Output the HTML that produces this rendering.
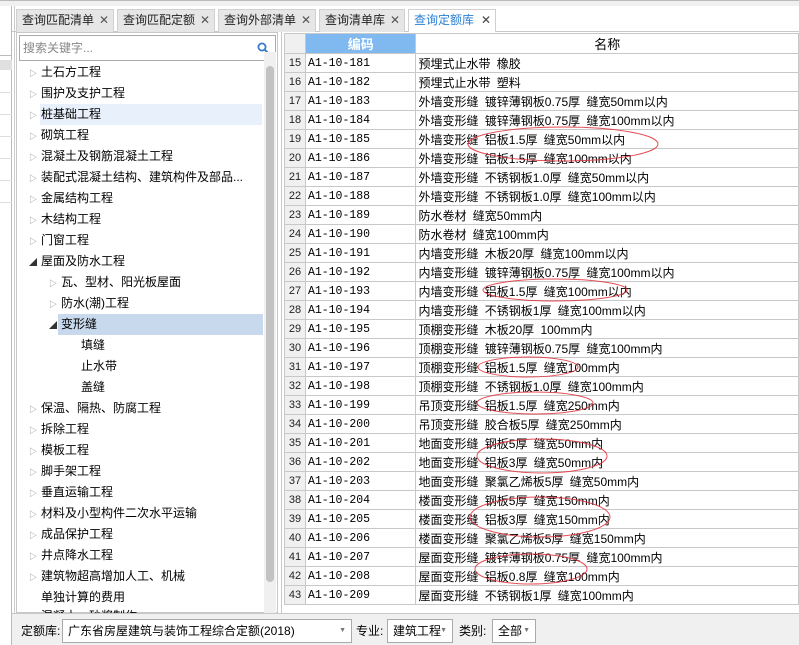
<!DOCTYPE html>
<html><head><meta charset="utf-8"><style>
*{margin:0;padding:0;box-sizing:border-box}
body{width:799px;height:645px;overflow:hidden;background:#fff;font-family:"Liberation Sans","Noto Sans CJK SC",sans-serif;font-size:12px;color:#000;position:relative}
.abs{position:absolute}
.tab{position:absolute;top:9px;height:23px;background:#e6e6e6;border:1px solid #d0d0d0;border-bottom:none;font-size:12px;line-height:21px;padding-left:5px;color:#222}
.tab .x{position:absolute;right:4px;top:0;color:#555;font-size:12px}
.tree div{position:absolute;height:21px;line-height:21px;font-size:12px;white-space:nowrap}
.tri{position:absolute;font-size:8px;color:#888}
table{border-collapse:collapse;position:absolute;left:284px;top:33px;table-layout:fixed}
td{border:1px solid #c8c8c8;height:19px;padding:0 2px;white-space:nowrap;overflow:hidden;font-size:12px;word-spacing:3px}
td.n{background:#f0f0f0;text-align:center;color:#222;font-size:11px}
td.c{font-family:"Liberation Mono","Noto Sans CJK SC",monospace;font-size:11.5px;word-spacing:0}
.sel{border:1px solid #aaa;background:#fff;height:24px;position:absolute;top:619px;font-size:12px;line-height:22px;padding-left:5px}
.sel .ar{position:absolute;right:5px;top:0;font-size:7px;color:#777}
.lbl{position:absolute;top:619px;font-size:12px;line-height:24px}
</style></head><body>
<div class="abs" style="left:0;top:0;width:799px;height:1px;background:#bbb"></div>
<div class="abs" style="left:0;top:1px;width:799px;height:5px;background:#f0f0f0"></div>
<div class="abs" style="left:0;top:31px;width:799px;height:1px;background:#c8c8c8"></div>
<div class="abs" style="left:0;top:6px;width:12px;height:639px;background:#fff;border-right:1px solid #bbb"></div>
<div class="abs" style="left:0;top:55px;width:12px;height:1px;background:#bbb"></div>
<div class="abs" style="left:0;top:60px;width:12px;height:10px;background:#e0e0e0"></div>
<div class="abs" style="left:0;top:92px;width:12px;height:1px;background:#ddd"></div>
<div class="abs" style="left:0;top:114px;width:12px;height:1px;background:#ddd"></div>
<div class="abs" style="left:0;top:136px;width:12px;height:1px;background:#ddd"></div>
<div class="abs" style="left:0;top:158px;width:12px;height:1px;background:#ddd"></div>
<div class="abs" style="left:0;top:180px;width:12px;height:1px;background:#ddd"></div>
<div class="abs" style="left:0;top:202px;width:12px;height:1px;background:#ddd"></div>
<div class="abs" style="left:14px;top:6px;width:1px;height:639px;background:#ccc"></div>
<div class="tab" style="left:16px;width:98px">查询匹配清单<span class="x">✕</span></div>
<div class="tab" style="left:117px;width:98px">查询匹配定额<span class="x">✕</span></div>
<div class="tab" style="left:218px;width:98px">查询外部清单<span class="x">✕</span></div>
<div class="tab" style="left:319px;width:86px">查询清单库<span class="x">✕</span></div>
<div class="tab" style="left:408px;width:88px;background:#fff;color:#2a7fd4;height:24px">查询定额库<span class="x" style="color:#444">✕</span></div>
<div class="abs" style="left:16px;top:32px;width:262px;height:581px;border:1px solid #c8c8c8;background:#fff"></div>
<div class="abs" style="left:19px;top:35px;width:257px;height:26px;border:1px solid #aaa;font-size:12px;line-height:24px;padding-left:3px;color:#888">搜索关键字...
<svg style="position:absolute;right:6px;top:6px" width="12" height="12"><circle cx="5" cy="5" r="3.6" fill="none" stroke="#3a7bc8" stroke-width="1.8"/><line x1="7.6" y1="7.6" x2="11" y2="11" stroke="#3a7bc8" stroke-width="2"/></svg></div>
<div class="abs" style="left:40px;top:104px;width:222px;height:21px;background:#e8f1fb"></div>
<div class="abs" style="left:58px;top:314px;width:205px;height:21px;background:#c8d9ee"></div>
<div class="abs" style="left:264px;top:52px;width:12px;height:561px;background:#f0f0f0"></div>
<div class="abs" style="left:266px;top:66px;width:8px;height:516px;background:#c2c2c2;border-radius:4px"></div>
<div class="tree">
<div style="left:41px;top:62px">土石方工程</div>
<div style="left:41px;top:83px">围护及支护工程</div>
<div style="left:41px;top:104px">桩基础工程</div>
<div style="left:41px;top:125px">砌筑工程</div>
<div style="left:41px;top:146px">混凝土及钢筋混凝土工程</div>
<div style="left:41px;top:167px">装配式混凝土结构、建筑构件及部品...</div>
<div style="left:41px;top:188px">金属结构工程</div>
<div style="left:41px;top:209px">木结构工程</div>
<div style="left:41px;top:230px">门窗工程</div>
<div style="left:41px;top:251px">屋面及防水工程</div>
<div style="left:61px;top:272px">瓦、型材、阳光板屋面</div>
<div style="left:61px;top:293px">防水(潮)工程</div>
<div style="left:61px;top:314px">变形缝</div>
<div style="left:81px;top:335px">填缝</div>
<div style="left:81px;top:356px">止水带</div>
<div style="left:81px;top:377px">盖缝</div>
<div style="left:41px;top:398px">保温、隔热、防腐工程</div>
<div style="left:41px;top:419px">拆除工程</div>
<div style="left:41px;top:440px">模板工程</div>
<div style="left:41px;top:461px">脚手架工程</div>
<div style="left:41px;top:482px">垂直运输工程</div>
<div style="left:41px;top:503px">材料及小型构件二次水平运输</div>
<div style="left:41px;top:524px">成品保护工程</div>
<div style="left:41px;top:545px">井点降水工程</div>
<div style="left:41px;top:566px">建筑物超高增加人工、机械</div>
<div style="left:41px;top:587px">单独计算的费用</div>
<div style="left:41px;top:606px;height:7px;overflow:hidden;line-height:21px">混凝土、砂浆制作</div>
</div>
<div class="tri" style="left:29px;top:68px">▷</div><div class="tri" style="left:29px;top:89px">▷</div><div class="tri" style="left:29px;top:110px">▷</div><div class="tri" style="left:29px;top:131px">▷</div><div class="tri" style="left:29px;top:152px">▷</div><div class="tri" style="left:29px;top:173px">▷</div><div class="tri" style="left:29px;top:194px">▷</div><div class="tri" style="left:29px;top:215px">▷</div><div class="tri" style="left:29px;top:236px">▷</div><div class="tri" style="left:29px;top:257px;color:#333">◢</div>
<div class="tri" style="left:49px;top:278px">▷</div><div class="tri" style="left:49px;top:299px">▷</div><div class="tri" style="left:49px;top:320px;color:#333">◢</div>
<div class="tri" style="left:29px;top:404px">▷</div><div class="tri" style="left:29px;top:425px">▷</div><div class="tri" style="left:29px;top:446px">▷</div><div class="tri" style="left:29px;top:467px">▷</div><div class="tri" style="left:29px;top:488px">▷</div><div class="tri" style="left:29px;top:509px">▷</div><div class="tri" style="left:29px;top:530px">▷</div><div class="tri" style="left:29px;top:551px">▷</div><div class="tri" style="left:29px;top:572px">▷</div>
<div class="abs" style="left:281px;top:32px;width:518px;height:581px;border-left:1px solid #c8c8c8;background:#fff"></div>
<table>
<colgroup><col style="width:21px"><col style="width:111px"><col style="width:384px"></colgroup>
<tr><td class="n"></td><td style="background:#7fb9f0;color:#fff;text-align:center;font-weight:bold;font-size:13px">编码</td><td style="text-align:center;font-size:13px">名称</td></tr>
<tr><td class="n">15</td><td class="c">A1-10-181</td><td>预埋式止水带 橡胶</td></tr>
<tr><td class="n">16</td><td class="c">A1-10-182</td><td>预埋式止水带 塑料</td></tr>
<tr><td class="n">17</td><td class="c">A1-10-183</td><td>外墙变形缝 镀锌薄钢板0.75厚 缝宽50mm以内</td></tr>
<tr><td class="n">18</td><td class="c">A1-10-184</td><td>外墙变形缝 镀锌薄钢板0.75厚 缝宽100mm以内</td></tr>
<tr><td class="n">19</td><td class="c">A1-10-185</td><td>外墙变形缝 铝板1.5厚 缝宽50mm以内</td></tr>
<tr><td class="n">20</td><td class="c">A1-10-186</td><td>外墙变形缝 铝板1.5厚 缝宽100mm以内</td></tr>
<tr><td class="n">21</td><td class="c">A1-10-187</td><td>外墙变形缝 不锈钢板1.0厚 缝宽50mm以内</td></tr>
<tr><td class="n">22</td><td class="c">A1-10-188</td><td>外墙变形缝 不锈钢板1.0厚 缝宽100mm以内</td></tr>
<tr><td class="n">23</td><td class="c">A1-10-189</td><td>防水卷材 缝宽50mm内</td></tr>
<tr><td class="n">24</td><td class="c">A1-10-190</td><td>防水卷材 缝宽100mm内</td></tr>
<tr><td class="n">25</td><td class="c">A1-10-191</td><td>内墙变形缝 木板20厚 缝宽100mm以内</td></tr>
<tr><td class="n">26</td><td class="c">A1-10-192</td><td>内墙变形缝 镀锌薄钢板0.75厚 缝宽100mm以内</td></tr>
<tr><td class="n">27</td><td class="c">A1-10-193</td><td>内墙变形缝 铝板1.5厚 缝宽100mm以内</td></tr>
<tr><td class="n">28</td><td class="c">A1-10-194</td><td>内墙变形缝 不锈钢板1厚 缝宽100mm以内</td></tr>
<tr><td class="n">29</td><td class="c">A1-10-195</td><td>顶棚变形缝 木板20厚 100mm内</td></tr>
<tr><td class="n">30</td><td class="c">A1-10-196</td><td>顶棚变形缝 镀锌薄钢板0.75厚 缝宽100mm内</td></tr>
<tr><td class="n">31</td><td class="c">A1-10-197</td><td>顶棚变形缝 铝板1.5厚 缝宽100mm内</td></tr>
<tr><td class="n">32</td><td class="c">A1-10-198</td><td>顶棚变形缝 不锈钢板1.0厚 缝宽100mm内</td></tr>
<tr><td class="n">33</td><td class="c">A1-10-199</td><td>吊顶变形缝 铝板1.5厚 缝宽250mm内</td></tr>
<tr><td class="n">34</td><td class="c">A1-10-200</td><td>吊顶变形缝 胶合板5厚 缝宽250mm内</td></tr>
<tr><td class="n">35</td><td class="c">A1-10-201</td><td>地面变形缝 钢板5厚 缝宽50mm内</td></tr>
<tr><td class="n">36</td><td class="c">A1-10-202</td><td>地面变形缝 铝板3厚 缝宽50mm内</td></tr>
<tr><td class="n">37</td><td class="c">A1-10-203</td><td>地面变形缝 聚氯乙烯板5厚 缝宽50mm内</td></tr>
<tr><td class="n">38</td><td class="c">A1-10-204</td><td>楼面变形缝 钢板5厚 缝宽150mm内</td></tr>
<tr><td class="n">39</td><td class="c">A1-10-205</td><td>楼面变形缝 铝板3厚 缝宽150mm内</td></tr>
<tr><td class="n">40</td><td class="c">A1-10-206</td><td>楼面变形缝 聚氯乙烯板5厚 缝宽150mm内</td></tr>
<tr><td class="n">41</td><td class="c">A1-10-207</td><td>屋面变形缝 镀锌薄钢板0.75厚 缝宽100mm内</td></tr>
<tr><td class="n">42</td><td class="c">A1-10-208</td><td>屋面变形缝 铝板0.8厚 缝宽100mm内</td></tr>
<tr><td class="n">43</td><td class="c">A1-10-209</td><td>屋面变形缝 不锈钢板1厚 缝宽100mm内</td></tr>
</table>
<svg class="abs" style="left:0;top:0" width="799" height="645">
<g fill="none" stroke="#e0303a" stroke-width="1" opacity="0.85">
<ellipse cx="563" cy="144" rx="95" ry="17"/>
<ellipse cx="555" cy="290" rx="72" ry="11"/>
<ellipse cx="528" cy="367" rx="50" ry="10"/>
<ellipse cx="535" cy="403" rx="58" ry="11"/>
<ellipse cx="542" cy="456" rx="65" ry="17"/>
<ellipse cx="540" cy="517" rx="70" ry="20"/>
<ellipse cx="531" cy="569" rx="56" ry="15"/>
</g></svg>
<div class="abs" style="left:12px;top:613px;width:787px;height:32px;background:#f0f0f0;border-top:1px solid #c8c8c8"></div>
<div class="lbl" style="left:21px">定额库:</div>
<div class="sel" style="left:62px;width:290px">广东省房屋建筑与装饰工程综合定额(2018)<span class="ar">▼</span></div>
<div class="lbl" style="left:356px">专业:</div>
<div class="sel" style="left:387px;width:66px">建筑工程<span class="ar">▼</span></div>
<div class="lbl" style="left:459px">类别:</div>
<div class="sel" style="left:492px;width:44px">全部<span class="ar">▼</span></div>
</body></html>
